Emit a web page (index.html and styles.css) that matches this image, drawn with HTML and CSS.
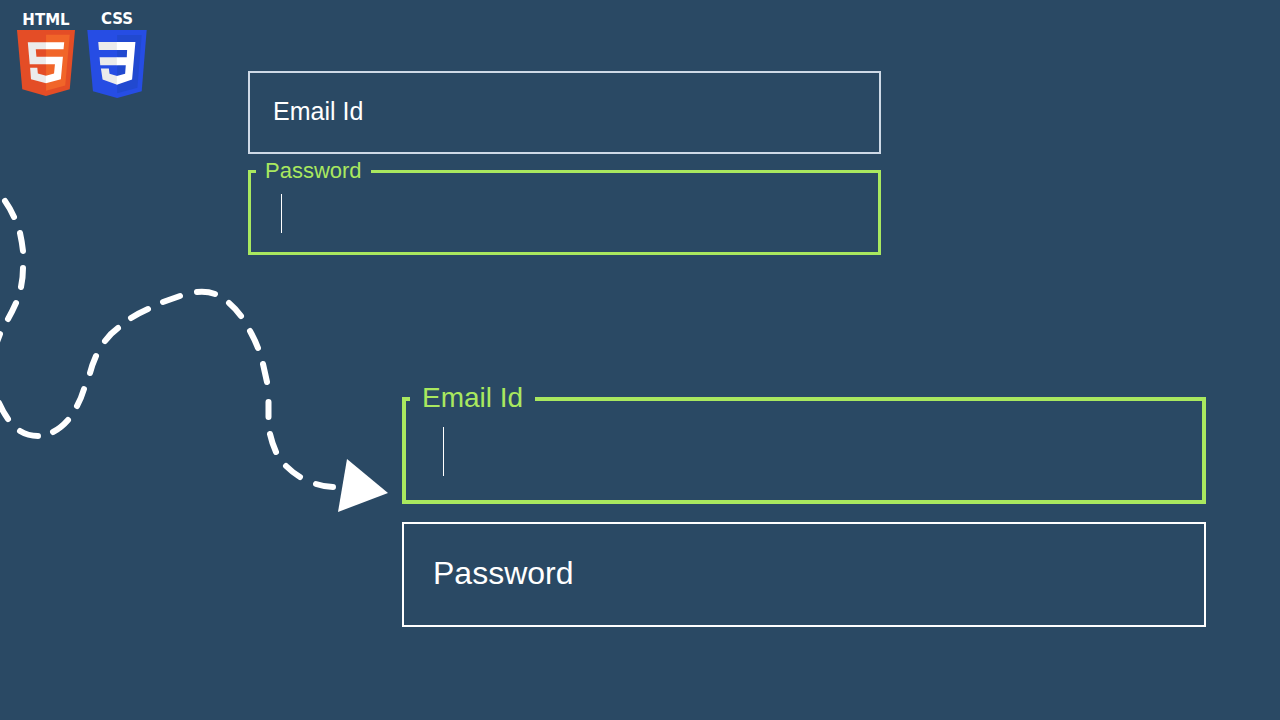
FILE: index.html
```html
<!DOCTYPE html>
<html lang="en">
<head>
<meta charset="utf-8">
<title>Floating label inputs</title>
<link rel="stylesheet" href="styles.css">
</head>
<body>
<svg class="trail" viewBox="0 0 400 520" aria-hidden="true">
  <path class="trail-line" d="M5 201Q10 208 14 217M20 233Q22 242 23 251M23 268Q23 278 21 287M16 303Q12 312 8 319M0 334L-3 342M-1 403Q3 412 8 419M20 431Q28 436 38 436M53 432Q61 428 68 420M77 406Q81 399 84 389M90 373Q92 365 96 356M105 341Q111 333 118 328M131 318Q139 313 148 309M163 302L180 296M197 292Q207 291 215 294M229 303Q236 309 241 316M250 331Q255 340 258 348M263 364Q265 373 267 382M268.500 402V417M270 434Q272 443 276 452M286 466Q292 472 300 477M316 484Q325 487 333 487"/>
  <path class="trail-head" d="M347 459L388 493L338 512Z"/>
</svg>
<main class="page">
  <header class="logos">
    <div class="logo">
      <span class="logo-name">HTML</span>
      <svg class="shield-html" viewBox="30 0 451 512" aria-hidden="true">
        <path fill="#e44d26" d="M71 460L30 0H481L440 460 255 512Z"/>
        <path fill="#f16529" d="M256 472L405 431 440 37H256Z"/>
        <path fill="#ebebeb" d="M256 208H181L176 150H256V94H114L129 265H256ZM256 355L192 338 188 293H132L139 382 256 414Z"/>
        <path fill="#fff" d="M255 208V265H325L318 338 255 355V414L371 382 387 208ZM255 94V150H392L397 94Z"/>
      </svg>
    </div>
    <div class="logo logo-css">
      <span class="logo-name">CSS</span>
      <svg class="shield-css" viewBox="262 90 179 205" aria-hidden="true">
        <path fill="#264de4" d="M262 90H441L426 275 352 295 279 275Z"/>
        <path fill="#2149d0" d="M352 105H426L413 264 352 281Z"/>
        <path fill="#ebebeb" d="M295 126H352V150H297ZM299 172H352V196H301ZM303 206H327L329 222 352 229V255L308 239Z"/>
        <path fill="#fff" d="M351 126H407L397 239 351 255V229L376 222 378 196H351V172H381L382 150H351Z"/>
      </svg>
    </div>
  </header>
  <form class="fields fields-small">
    <div class="field">
      <input class="input" id="email-a" type="email">
      <label class="label" for="email-a">Email Id</label>
    </div>
    <div class="field active">
      <input class="input" id="password-a" type="password">
      <label class="label" for="password-a">Password</label>
      <span class="caret"></span>
    </div>
  </form>
  <form class="fields fields-large">
    <div class="field active">
      <input class="input" id="email-b" type="email">
      <label class="label" for="email-b">Email Id</label>
      <span class="caret"></span>
    </div>
    <div class="field">
      <input class="input" id="password-b" type="password">
      <label class="label" for="password-b">Password</label>
    </div>
  </form>
</main>
</body>
</html>
```
FILE: styles.css
```css
* { box-sizing: border-box; }
body {
  margin: 0;
  background: #2a4964;
  color: #fff;
  font-family: "Liberation Sans", Arial, sans-serif;
}
.page {
  display: grid;
  grid-template-columns: 248px 1fr;
  min-height: 100vh;
  align-content: start;
}
.logos {
  display: flex;
  align-items: flex-start;
  gap: 12px;
  padding: 11px 0 0 17px;
}
.logo {
  display: flex;
  flex-direction: column;
  align-items: center;
}
.logo-name {
  font: 700 15px/19px "DejaVu Sans", sans-serif;
}
.logo-css .logo-name {
  line-height: 17px;
  padding-bottom: 2px;
}
.logo svg { display: block; }
.shield-html { width: 58px; height: 66px; }
.shield-css { width: 60px; height: 68px; }

.trail {
  position: absolute;
  top: 0;
  left: 0;
  width: 400px;
  height: 520px;
}
.trail-line {
  fill: none;
  stroke: #fff;
  stroke-width: 6;
  stroke-linecap: round;
}
.trail-head { fill: #fff; }

.fields {
  display: grid;
  gap: 16px;
}
.fields-small {
  margin: 71px 399px 0 0;
}
.fields-large {
  grid-column: 1 / -1;
  gap: 18px;
  margin: 142px 74px 0 402px;
}
.field { position: relative; }
.input {
  display: block;
  width: 100%;
  height: 83px;
  border: 2px solid #ced9e6;
  background: transparent;
  color: #fff;
  padding: 0 30px;
  font: inherit;
  font-size: 26px;
  outline: none;
}
.label {
  position: absolute;
  top: 40px;
  left: 25px;
  transform: translateY(-50%);
  font-size: 25px;
  line-height: 30px;
  pointer-events: none;
}
.active .input {
  height: 85px;
  border: 3px solid #a9e85f;
}
.active .label {
  top: 1px;
  left: 8px;
  padding: 0 9px;
  background: #2a4964;
  color: #a9e85f;
  font-size: 22px;
}
.caret {
  position: absolute;
  top: 24px;
  left: 33px;
  width: 1px;
  height: 39px;
  background: #fff;
}
.fields-large .input {
  height: 105px;
  border-color: #fff;
}
.fields-large .label {
  top: 51px;
  left: 31px;
  font-size: 32px;
}
.fields-large .active .input {
  height: 107px;
  border: 4px solid #a9e85f;
}
.fields-large .active .label {
  top: 1px;
  left: 8px;
  padding: 0 12px;
  font-size: 28px;
}
.fields-large .caret {
  top: 30px;
  left: 41px;
  height: 49px;
}
```
